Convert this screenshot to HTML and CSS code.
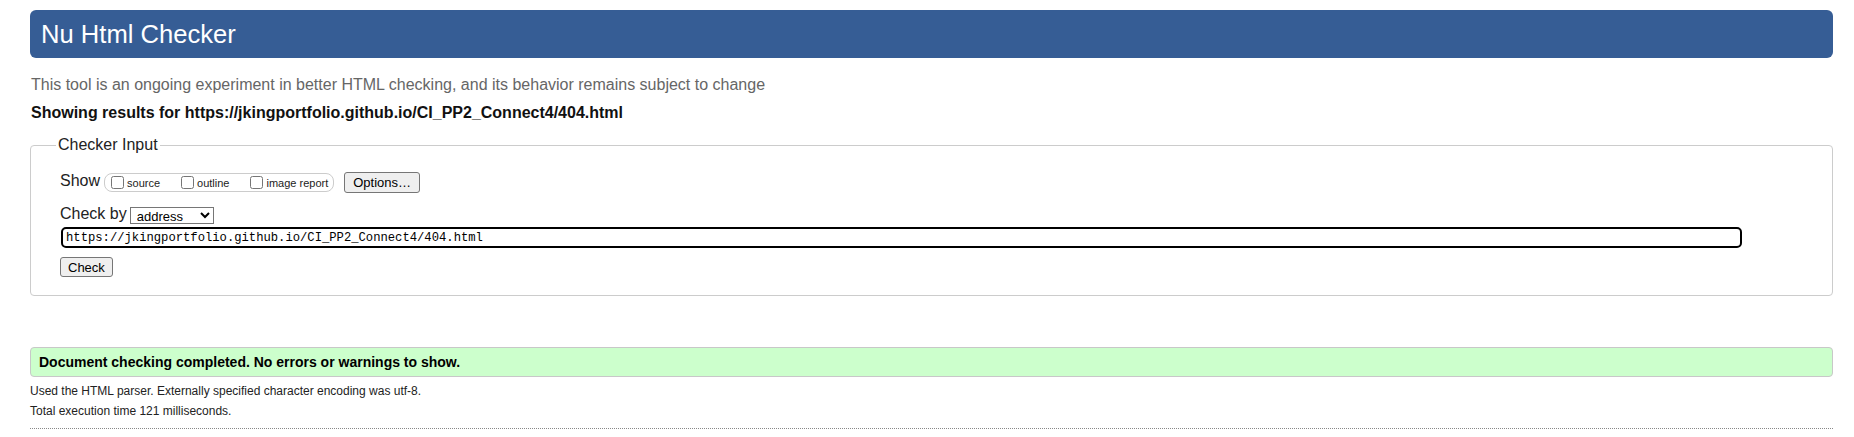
FILE: index.html
```html
<!DOCTYPE html>
<html lang="en">
<head>
<meta charset="utf-8">
<title>Showing results for https://jkingportfolio.github.io/CI_PP2_Connect4/404.html - Nu Html Checker</title>
<link rel="stylesheet" href="styles.css">
</head>
<body>
<h1 class="title">Nu Html Checker</h1>
<p class="intro">This tool is an ongoing experiment in better HTML checking, and its behavior remains subject to change</p>
<p class="showing">Showing results for https://jkingportfolio.github.io/CI_PP2_Connect4/404.html</p>
<form class="checker-form">
  <fieldset class="input-box">
    <legend class="input-legend">Checker Input</legend>
    <div class="row row-show">
      <span class="row-label">Show</span>
      <span class="show-group">
        <label class="opt"><input class="cb" type="checkbox">source</label>
        <label class="opt"><input class="cb" type="checkbox">outline</label>
        <label class="opt opt-last"><input class="cb" type="checkbox">image report</label>
      </span>
      <button class="btn btn-options" type="button">Options…</button>
    </div>
    <div class="row row-by">
      <span class="row-label">Check by</span>
      <select class="by-select"><option>address</option></select>
    </div>
    <div class="row row-url">
      <input class="url" type="url" value="https://jkingportfolio.github.io/CI_PP2_Connect4/404.html">
    </div>
    <div class="row row-submit">
      <button class="btn btn-check" type="button">Check</button>
    </div>
  </fieldset>
</form>
<div class="success">Document checking completed. No errors or warnings to show.</div>
<div class="details">
  <p class="detail-line">Used the HTML parser. Externally specified character encoding was utf-8.</p>
  <p class="detail-line">Total execution time 121 milliseconds.</p>
</div>
<hr class="sep">
</body>
</html>
```

FILE: styles.css
```css
html, body {
  background: #fff;
}
body {
  margin: 0;
  padding: 10px 21px 0 30px;
  font-family: "Liberation Sans", Arial, sans-serif;
  color: #000;
}
.title {
  margin: 0;
  height: 48px;
  line-height: 48px;
  padding: 0 11px;
  background: #365d95;
  color: #fff;
  font-size: 25.6px;
  font-weight: normal;
  border-radius: 6px;
}
.intro {
  margin: 18px 0 0 1px;
  font-size: 16px;
  line-height: 18px;
  color: #666;
}
.showing {
  margin: 10px 0 0 1px;
  font-size: 16px;
  line-height: 18px;
  font-weight: bold;
  color: #111;
}
.checker-form {
  margin: 14px 0 0;
}
.input-box {
  margin: 0;
  min-width: 0;
  padding: 18px 20px 18px 29px;
  border: 1px solid #ccc;
  border-radius: 4px;
}
.input-legend {
  margin-left: -4px;
  padding: 0 2px;
  font-size: 16px;
  line-height: 18px;
  color: #222;
}
.row {
  display: flex;
  align-items: flex-start;
}
.row-label {
  font-size: 16px;
  line-height: 18px;
  color: #222;
}
.row-show {
  height: 21px;
}
.show-group {
  display: flex;
  align-items: center;
  box-sizing: border-box;
  height: 19px;
  margin: 1px 0 0 4px;
  padding: 0 5px 0 6px;
  border: 1px solid #ccc;
  border-radius: 8px;
}
.opt {
  display: inline-flex;
  align-items: center;
  font-size: 11px;
  color: #222;
  margin-right: 21px;
}
.opt-last {
  margin-right: 0;
}
.cb {
  width: 13px;
  height: 13px;
  margin: 0 3px 0 0;
}
.btn {
  box-sizing: border-box;
  font-family: "Liberation Sans", Arial, sans-serif;
  font-size: 13px;
  color: #000;
  background: #efefef;
  border: 1px solid #767676;
  border-radius: 3px;
}
.btn-options {
  height: 21px;
  margin-left: 10px;
  padding: 0 8px;
}
.row-by {
  margin-top: 12px;
}
.by-select {
  box-sizing: border-box;
  width: 84px;
  height: 17px;
  margin: 2px 0 0 3px;
  font-family: "Liberation Sans", Arial, sans-serif;
  font-size: 13px;
  color: #000;
  background: #fff;
  border: 1px solid #767676;
  border-radius: 0;
  padding: 0 0 0 2px;
}
.row-url {
  margin-top: 3px;
}
.url {
  box-sizing: border-box;
  flex: 0 0 auto;
  width: 1681px;
  height: 21px;
  margin: 0 0 0 1px;
  padding: 0 3px;
  font-family: "Liberation Mono", "DejaVu Sans Mono", monospace;
  font-size: 12.2px;
  color: #000;
  border: 2px solid #000;
  border-radius: 5px;
  outline: none;
}
.row-submit {
  margin-top: 9px;
}
.btn-check {
  height: 20px;
  padding: 0 7px;
}
.success {
  margin-top: 51px;
  height: 30px;
  box-sizing: border-box;
  padding: 0 8px;
  line-height: 28px;
  font-size: 14px;
  font-weight: bold;
  color: #000;
  background: #ccffcc;
  border: 1px solid #c8c8c8;
  border-radius: 4px;
}
.details {
  margin-top: 4px;
}
.detail-line {
  margin: 0;
  font-size: 12px;
  line-height: 20px;
  color: #222;
}
.sep {
  margin: 7px 0 0;
  border: 0;
  border-top: 1px dotted #888;
  height: 0;
}
```
